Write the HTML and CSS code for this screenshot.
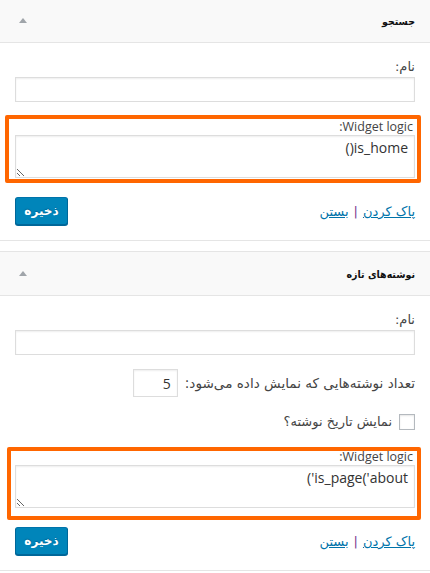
FILE: index.html
```
<!DOCTYPE html>
<html lang="fa" dir="rtl">
<head>
<meta charset="utf-8">
<title>ابزارک‌ها</title>
<link rel="stylesheet" href="styles.css">
</head>
<body>
  <div class="widget widget--first">
    <div class="widget-top">
      <h3 class="widget-title">جستجو</h3>
      <span class="toggle-arrow"></span>
    </div>
    <div class="widget-inside">
      <label class="field-label">نام:</label>
      <input class="text-input" type="text" value="">
      <div class="highlight highlight--one">
        <label class="logic-label">Widget logic:</label>
        <textarea class="logic-area">is_home()</textarea>
      </div>
      <div class="actions actions--one">
        <div class="action-links">
          <a href="#" class="action-link">پاک کردن</a>
          <span class="sep">|</span>
          <a href="#" class="action-link">بستن</a>
        </div>
        <button class="save-btn" type="button">ذخیره</button>
      </div>
    </div>
  </div>

  <div class="widget">
    <div class="widget-top">
      <h3 class="widget-title">نوشته‌های تازه</h3>
      <span class="toggle-arrow"></span>
    </div>
    <div class="widget-inside">
      <label class="field-label">نام:</label>
      <input class="text-input" type="text" value="">
      <div class="count-row">
        <span>تعداد نوشته‌هایی که نمایش داده می‌شود:</span>
        <input class="count-input" type="text" value="5">
      </div>
      <div class="check-row">
        <input class="check" type="checkbox">
        <span>نمایش تاریخ نوشته؟</span>
      </div>
      <div class="highlight highlight--two">
        <label class="logic-label logic-label--two">Widget logic:</label>
        <textarea class="logic-area">&#x202D;('is_page('about&#x202C;</textarea>
      </div>
      <div class="actions actions--two">
        <div class="action-links">
          <a href="#" class="action-link">پاک کردن</a>
          <span class="sep">|</span>
          <a href="#" class="action-link">بستن</a>
        </div>
        <button class="save-btn" type="button">ذخیره</button>
      </div>
    </div>
  </div>
</body>
</html>
```
FILE: styles.css
```
html, body {
  margin: 0;
  padding: 0;
  background: #fff;
}
body {
  font-family: "Open Sans", "DejaVu Sans", sans-serif;
  font-size: 13px;
  color: #444;
  overflow: hidden;
}
.widget {
  border: 1px solid #e5e5e5;
  margin: 0 -1px;
  background: #fff;
}
.widget--first {
  margin-top: -2px;
}
.widget + .widget {
  margin-top: 10px;
}
.widget-top {
  height: 43px;
  background: #f9f9f9;
  border-bottom: 1px solid #e5e5e5;
  display: flex;
  align-items: center;
  justify-content: space-between;
  padding: 0 15px 0 19px;
}
.widget-title {
  margin: 0;
  font-family: "DejaVu Sans Condensed", "DejaVu Sans", sans-serif;
  font-size: 10.5px;
  font-weight: bold;
  color: #111;
}
.toggle-arrow {
  width: 0;
  height: 0;
  border-left: 4px solid transparent;
  border-right: 4px solid transparent;
  border-bottom: 5px solid #a0a5aa;
}
.widget-inside {
  padding: 16px 15px 14px;
}
.field-label {
  display: block;
  line-height: 16px;
  margin-bottom: 2px;
  font-family: "DejaVu Sans", sans-serif;
  font-size: 13px;
  color: #444;
}
.text-input {
  display: block;
  width: 100%;
  height: 25px;
  box-sizing: border-box;
  margin: 0;
  border: 1px solid #ddd;
  box-shadow: inset 0 1px 2px rgba(0, 0, 0, .07);
  background: #fff;
}
.highlight {
  border: 4px solid #ff6600;
  border-radius: 2px;
}
.highlight--one {
  margin: 13px -6px 0 -10px;
  padding: 0 2px 1px 6px;
}
.highlight--two {
  margin: 17px -6px 0 -8px;
  padding: 0 2px 8px 4px;
}
.logic-label {
  display: block;
  line-height: 16px;
  font-family: "Open Sans", sans-serif;
  font-size: 12.5px;
  color: #444;
  padding-right: 2px;
}
.logic-label--two {
  line-height: 12px;
  padding-bottom: 2px;
}
.logic-area {
  display: block;
  width: 100%;
  height: 43px;
  box-sizing: border-box;
  margin: 0;
  border: 1px solid #ddd;
  box-shadow: inset 0 1px 2px rgba(0, 0, 0, .07);
  padding: 2px 6px;
  font-family: "Open Sans", sans-serif;
  font-size: 14px;
  line-height: 20px;
  color: #333;
  resize: vertical;
}
.actions {
  display: flex;
  align-items: center;
  justify-content: space-between;
}
.actions--one {
  margin-top: 14px;
}
.actions--two {
  margin-top: 7px;
}
.action-links {
  display: flex;
  align-items: center;
  gap: 5px;
  font-family: "DejaVu Sans", sans-serif;
  font-size: 13px;
}
.action-link {
  color: #0073aa;
  text-decoration: underline;
}
.sep {
  color: #7b3d8f;
}
.save-btn {
  height: 28px;
  min-width: 53px;
  padding: 0 8px;
  margin: 0 0 1px;
  box-sizing: border-box;
  background: #0085ba;
  border: 1px solid #0073aa;
  border-color: #0073aa #006799 #006799;
  border-radius: 3px;
  box-shadow: 0 1px 0 #006799;
  color: #fff;
  font-family: "DejaVu Sans", sans-serif;
  font-size: 12px;
  font-weight: bold;
  text-shadow: 0 -1px 1px #006799;
}
.count-row {
  margin-top: 14px;
  display: flex;
  align-items: center;
  gap: 7px;
  height: 28px;
  font-family: "DejaVu Sans", sans-serif;
  font-size: 13.6px;
}
.count-input {
  width: 45px;
  height: 28px;
  box-sizing: border-box;
  margin: 0;
  border: 1px solid #ddd;
  box-shadow: inset 0 1px 2px rgba(0, 0, 0, .07);
  padding: 0 6px;
  font-family: "Open Sans", sans-serif;
  font-size: 14px;
  color: #333;
}
.check-row {
  margin-top: 16px;
  display: flex;
  align-items: center;
  gap: 7px;
  height: 17px;
  font-family: "DejaVu Sans", sans-serif;
  font-size: 13px;
}
.check {
  appearance: none;
  -webkit-appearance: none;
  width: 16px;
  height: 16px;
  margin: 0;
  border: 1px solid #b4b9be;
  background: #fff;
  box-shadow: inset 0 1px 2px rgba(0, 0, 0, .1);
}
```
